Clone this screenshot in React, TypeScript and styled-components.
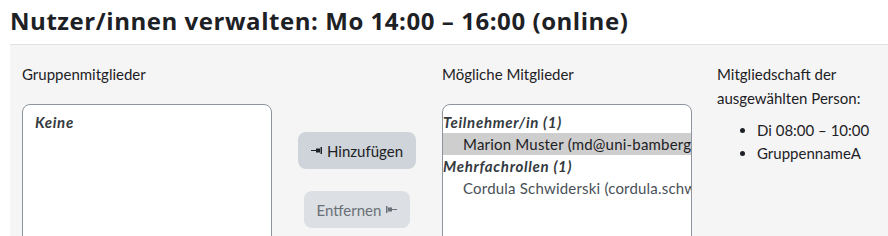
import React from 'react';
import styled, { createGlobalStyle } from 'styled-components';

const GlobalStyle = createGlobalStyle`
  html, body {
    margin: 0;
    padding: 0;
    background: #ffffff;
    overflow: hidden;
  }
  body {
    font-family: "Lato", "Liberation Sans", sans-serif;
    color: #1d2125;
    font-size: 15px;
  }
`;

const Page = styled.div`
  padding-left: 10px;
  width: 940px;
`;

const Heading = styled.h2`
  margin: 0;
  padding: 6px 0 8px;
  font-family: "Open Sans", "Lato", sans-serif;
  font-size: 24px;
  line-height: 30px;
  font-weight: 700;
  letter-spacing: 0.55px;
  color: #1d2125;
`;

const Panel = styled.div`
  border-top: 1px solid #dee2e6;
  background: #f5f5f5;
  padding: 12px 12px 20px;
  display: flex;
  align-items: flex-start;
  min-height: 200px;
`;

const Column = styled.div<{ $width: number }>`
  width: ${({ $width }) => $width}px;
  flex: none;
`;

const Label = styled.div`
  line-height: 24px;
  height: 24px;
  margin-top: 5px;
`;

const ListBox = styled.div`
  margin-top: 18px;
  height: 180px;
  background: #ffffff;
  border: 1px solid #8f959e;
  border-radius: 8px;
  overflow: hidden;
  padding-top: 6px;
`;

const GroupLabel = styled.div<{ $indent?: number }>`
  font-weight: 700;
  font-style: italic;
  color: #343a40;
  line-height: 22px;
  letter-spacing: 0.7px;
  padding-left: ${({ $indent }) => $indent ?? 0}px;
  white-space: nowrap;
`;

const Option = styled.div<{ $selected?: boolean }>`
  line-height: 22px;
  padding-left: 20px;
  letter-spacing: 0.2px;
  white-space: nowrap;
  color: ${({ $selected }) => ($selected ? '#1d2125' : '#495057')};
  background: ${({ $selected }) => ($selected ? '#cecece' : 'transparent')};
`;

const ButtonColumn = styled.div`
  width: 170px;
  flex: none;
  display: flex;
  flex-direction: column;
  align-items: center;
  gap: 22px;
  padding-top: 75px;
`;

const Button = styled.button<{ $disabled?: boolean }>`
  font-family: inherit;
  font-size: 15px;
  height: 37px;
  padding: 0 13px;
  border: none;
  border-radius: 8px;
  display: inline-flex;
  align-items: center;
  gap: 5px;
  background: ${({ $disabled }) => ($disabled ? '#dcdfe3' : '#ced4da')};
  color: ${({ $disabled }) => ($disabled ? '#6a7077' : '#1d2125')};
`;

const InfoColumn = styled.div`
  width: 160px;
  flex: none;
  margin-left: 25px;
  line-height: 24px;
  margin-top: 5px;
`;

const MembershipList = styled.ul`
  margin: 9px 0 0;
  padding-left: 40px;
  line-height: 23px;
`;

const ArrowTo = ({ flip }: { flip?: boolean }) => (
  <svg width="11" height="7" viewBox="0 0 11 7" style={flip ? { transform: 'scaleX(-1)' } : undefined}>
    <rect x="0" y="3" width="5" height="1" fill="currentColor" />
    <rect x="5" y="1.5" width="4" height="4" fill="currentColor" />
    <rect x="9.5" y="0" width="1.5" height="7" fill="currentColor" />
  </svg>
);

export default function App() {
  return (
    <>
      <GlobalStyle />
      <Page>
        <Heading>Nutzer/innen verwalten: Mo 14:00 – 16:00 (online)</Heading>
        <Panel>
          <Column $width={250}>
            <Label>Gruppenmitglieder</Label>
            <ListBox>
              <GroupLabel $indent={12}>Keine</GroupLabel>
            </ListBox>
          </Column>
          <ButtonColumn>
            <Button>
              <ArrowTo />
              Hinzufügen
            </Button>
            <Button $disabled>
              Entfernen
              <ArrowTo flip />
            </Button>
          </ButtonColumn>
          <Column $width={250}>
            <Label>Mögliche Mitglieder</Label>
            <ListBox>
              <GroupLabel>Teilnehmer/in (1)</GroupLabel>
              <Option $selected>Marion Muster (md@uni-bamberg.de)</Option>
              <GroupLabel>Mehrfachrollen (1)</GroupLabel>
              <Option>Cordula Schwiderski (cordula.schwiderski@uni-bamberg.de)</Option>
            </ListBox>
          </Column>
          <InfoColumn>
            Mitgliedschaft der ausgewählten Person:
            <MembershipList>
              <li>Di 08:00 – 10:00</li>
              <li>GruppennameA</li>
            </MembershipList>
          </InfoColumn>
        </Panel>
      </Page>
    </>
  );
}
